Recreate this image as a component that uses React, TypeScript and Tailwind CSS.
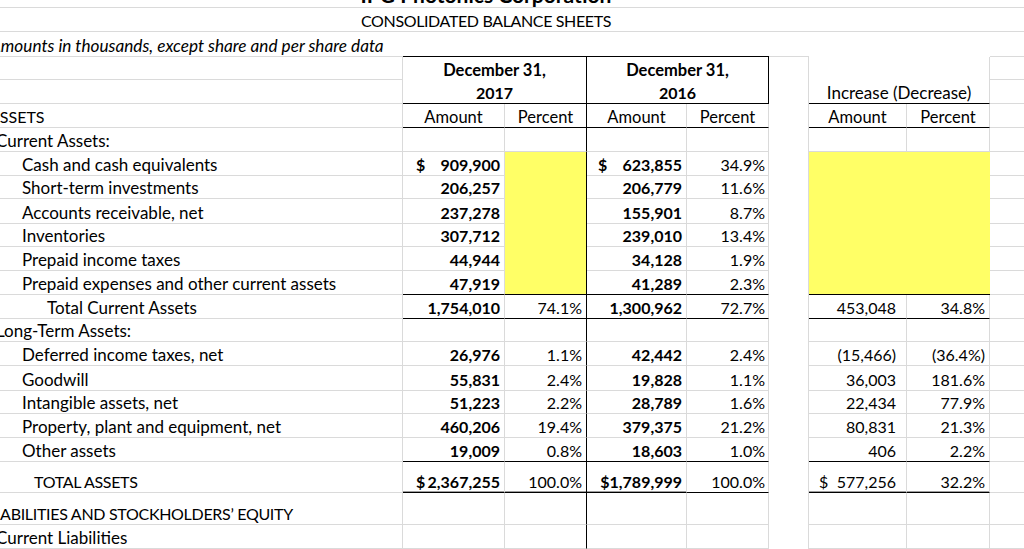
import React from "react"

type B = "l" | "d" | "dd" | undefined

function cx(...c: (string | false | undefined | null)[]) {
  return c.filter(Boolean).join(" ")
}

const rB = { l: "border-r border-r-[#dadada]", d: "border-r border-r-black" }
const bB = {
  l: "border-b border-b-[#dadada]",
  d: "border-b border-b-black",
  dd: "border-b border-b-black shadow-[inset_0_-1px_0_#9d9d9d]",
}

function Cell({
  w,
  r,
  b,
  className,
  children,
}: {
  w: string
  r?: "l" | "d"
  b?: B
  className?: string
  children?: React.ReactNode
}) {
  return (
    <div className={cx("flex items-end shrink-0 whitespace-nowrap leading-[20px]", w, r && rB[r], b && bB[b], className)}>
      {children}
    </div>
  )
}

type Amt = { d?: boolean; v: string }

function Money({ a, pad, bold }: { a?: Amt; pad: string; bold?: boolean }) {
  if (!a) return null
  return (
    <div className={cx("flex w-full justify-between", pad, bold && "font-bold")}>
      <span>{a.d ? "$" : ""}</span>
      <span>{a.v}</span>
    </div>
  )
}

type LineProps = {
  h: string
  label?: string
  indent?: string
  caps?: boolean
  c?: Amt
  d?: string
  e?: Amt
  f?: string
  hh?: Amt
  ii?: string
  yellow?: boolean
  bot?: "l" | "d" | "dd"
}

const YEL = "bg-[#ffff66]"

function Line({ h, label, indent = "pl-[34px]", caps, c, d, e, f, hh, ii, yellow, bot = "l" }: LineProps) {
  const main: B = bot
  const fb: B = bot === "dd" ? "d" : bot
  const yb: B = yellow ? (bot === "d" ? "d" : undefined) : main
  return (
    <div className={cx("flex", h)}>
      <Cell w="w-[415px]" r="l" b="l" className={cx(indent, caps ? "tracking-[-0.3px]" : "text-[17px]")}>
        {label}
      </Cell>
      <Cell w="w-[102px]" r="l" b={main}>
        <Money a={c} pad="pl-[13px] pr-[4px]" bold />
      </Cell>
      <Cell w="w-[82px]" r="d" b={yb} className={cx("justify-end pr-[4px]", yellow && YEL)}>
        {d}
      </Cell>
      <Cell w="w-[100px]" r="l" b={main}>
        <Money a={e} pad="pl-[11px] pr-[4px]" bold />
      </Cell>
      <Cell w="w-[82px]" r="l" b={fb} className="justify-end pr-[3px]">
        {f}
      </Cell>
      <Cell w="w-[40px]" r="l" />
      <Cell w="w-[98px]" r={yellow ? undefined : "l"} b={yb} className={cx(yellow && YEL)}>
        <Money a={hh} pad="pl-[10px] pr-[10px]" />
      </Cell>
      <Cell w="w-[83px]" r={yellow ? undefined : "l"} b={yb} className={cx("justify-end pr-[4px]", yellow && YEL)}>
        {ii}
      </Cell>
      <Cell w="w-[140px]" b="l" />
    </div>
  )
}

const current: [string, Amt, Amt, string, string][] = [
  ["Cash and cash equivalents", { d: true, v: "909,900" }, { d: true, v: "623,855" }, "34.9%", "h-[24px]"],
  ["Short-term investments", { v: "206,257" }, { v: "206,779" }, "11.6%", "h-[23px]"],
  ["Accounts receivable, net", { v: "237,278" }, { v: "155,901" }, "8.7%", "h-[25px]"],
  ["Inventories", { v: "307,712" }, { v: "239,010" }, "13.4%", "h-[23px]"],
  ["Prepaid income taxes", { v: "44,944" }, { v: "34,128" }, "1.9%", "h-[24px]"],
  ["Prepaid expenses and other current assets", { v: "47,919" }, { v: "41,289" }, "2.3%", "h-[24px]"],
]

const longTerm: [string, string, string, string, string, string, string, string][] = [
  ["Deferred income taxes, net", "26,976", "1.1%", "42,442", "2.4%", "(15,466)", "(36.4%)", "h-[24px]"],
  ["Goodwill", "55,831", "2.4%", "19,828", "1.1%", "36,003", "181.6%", "h-[25px]"],
  ["Intangible assets, net", "51,223", "2.2%", "28,789", "1.6%", "22,434", "77.9%", "h-[23px]"],
  ["Property, plant and equipment, net", "460,206", "19.4%", "379,375", "21.2%", "80,831", "21.3%", "h-[24px]"],
  ["Other assets", "19,009", "0.8%", "18,603", "1.0%", "406", "2.2%", "h-[24px]"],
]

export default function App() {
  return (
    <div className="w-[1024px] h-[549px] overflow-hidden bg-white text-black font-[family-name:Lato,sans-serif] text-[16px]">
      <div className="-ml-[12px] w-[1150px] flex flex-col">
        {/* title, scrolled mostly out of view */}
        <div className="h-[8px] flex items-end border-b border-b-[#dadada]">
          <div className="w-[996px] text-center font-bold text-[21px] leading-[25px] whitespace-nowrap">
            IPG Photonics Corporation
          </div>
        </div>
        <div className="h-[24px] flex items-end border-b border-b-[#dadada]">
          <div className="w-[996px] text-center leading-[20px] tracking-[-0.37px]">CONSOLIDATED BALANCE SHEETS</div>
        </div>
        <div className="h-[25px] flex">
          <Cell w="w-[415px]" b="l" className="italic pl-[2px] text-[17.2px]">
            Amounts in thousands, except share and per share data
          </Cell>
          <Cell w="w-[366px]" b="d" />
          <Cell w="w-[40px]" b="l" />
          <Cell w="w-[181px]" />
          <Cell w="w-[140px]" b="l" />
        </div>

        {/* column headers */}
        <div className="h-[23px] flex">
          <Cell w="w-[415px]" r="l" b="l" />
          <Cell w="w-[184px]" r="d" className="justify-center font-bold text-[16.5px]">
            December 31,
          </Cell>
          <Cell w="w-[182px]" r="d" className="justify-center font-bold text-[16.5px]">
            December 31,
          </Cell>
          <Cell w="w-[40px]" r="l" />
          <Cell w="w-[181px]" r="l" />
          <Cell w="w-[140px]" b="l" />
        </div>
        <div className="h-[24px] flex">
          <Cell w="w-[415px]" r="l" b="l" />
          <Cell w="w-[184px]" r="d" b="d" className="justify-center font-bold">
            2017
          </Cell>
          <Cell w="w-[182px]" r="d" b="d" className="justify-center font-bold">
            2016
          </Cell>
          <Cell w="w-[40px]" r="l" />
          <Cell w="w-[181px]" r="l" b="d" className="justify-center text-[17px]">
            Increase (Decrease)
          </Cell>
          <Cell w="w-[140px]" b="l" />
        </div>
        <div className="h-[24px] flex">
          <Cell w="w-[415px]" r="l" b="l" className="pl-[1px]">
            ASSETS
          </Cell>
          <Cell w="w-[102px]" r="l" b="d" className="justify-center text-[16.5px]">
            Amount
          </Cell>
          <Cell w="w-[82px]" r="d" b="d" className="justify-center text-[16.5px]">
            Percent
          </Cell>
          <Cell w="w-[100px]" r="l" b="d" className="justify-center text-[16.5px]">
            Amount
          </Cell>
          <Cell w="w-[82px]" r="l" b="d" className="justify-center text-[16.5px]">
            Percent
          </Cell>
          <Cell w="w-[40px]" r="l" />
          <Cell w="w-[98px]" r="l" b="d" className="justify-center text-[16.5px]">
            Amount
          </Cell>
          <Cell w="w-[83px]" r="l" b="d" className="justify-center text-[16.5px]">
            Percent
          </Cell>
          <Cell w="w-[140px]" b="l" />
        </div>

        <Line h="h-[24px]" label="Current Assets:" indent="pl-[8px]" />
        {current.map(([label, c, e, f, h], i) => (
          <Line key={label} h={h} label={label} c={c} e={e} f={f} yellow bot={i === current.length - 1 ? "d" : "l"} />
        ))}
        <Line
          h="h-[24px]"
          label="Total Current Assets"
          indent="pl-[59px]"
          c={{ v: "1,754,010" }}
          d="74.1%"
          e={{ v: "1,300,962" }}
          f="72.7%"
          hh={{ v: "453,048" }}
          ii="34.8%"
          bot="d"
        />
        <Line h="h-[23px]" label="Long-Term Assets:" indent="pl-[8px]" />
        {longTerm.map(([label, c, d, e, f, hv, ii, h], i) => (
          <Line
            key={label}
            h={h}
            label={label}
            c={{ v: c }}
            d={d}
            e={{ v: e }}
            f={f}
            hh={{ v: hv }}
            ii={ii}
            bot={i === longTerm.length - 1 ? "d" : "l"}
          />
        ))}
        <Line
          h="h-[31px]"
          label="TOTAL ASSETS"
          indent="pl-[46px]"
          caps
          c={{ d: true, v: "2,367,255" }}
          d="100.0%"
          e={{ v: "$1,789,999" }}
          f="100.0%"
          hh={{ d: true, v: "577,256" }}
          ii="32.2%"
          bot="dd"
        />
        <Line h="h-[32px]" label="LIABILITIES AND STOCKHOLDERS’ EQUITY" indent="pl-0" caps />
        <Line h="h-[24px]" label="Current Liabilities" indent="pl-[8px]" />
      </div>
    </div>
  )
}
